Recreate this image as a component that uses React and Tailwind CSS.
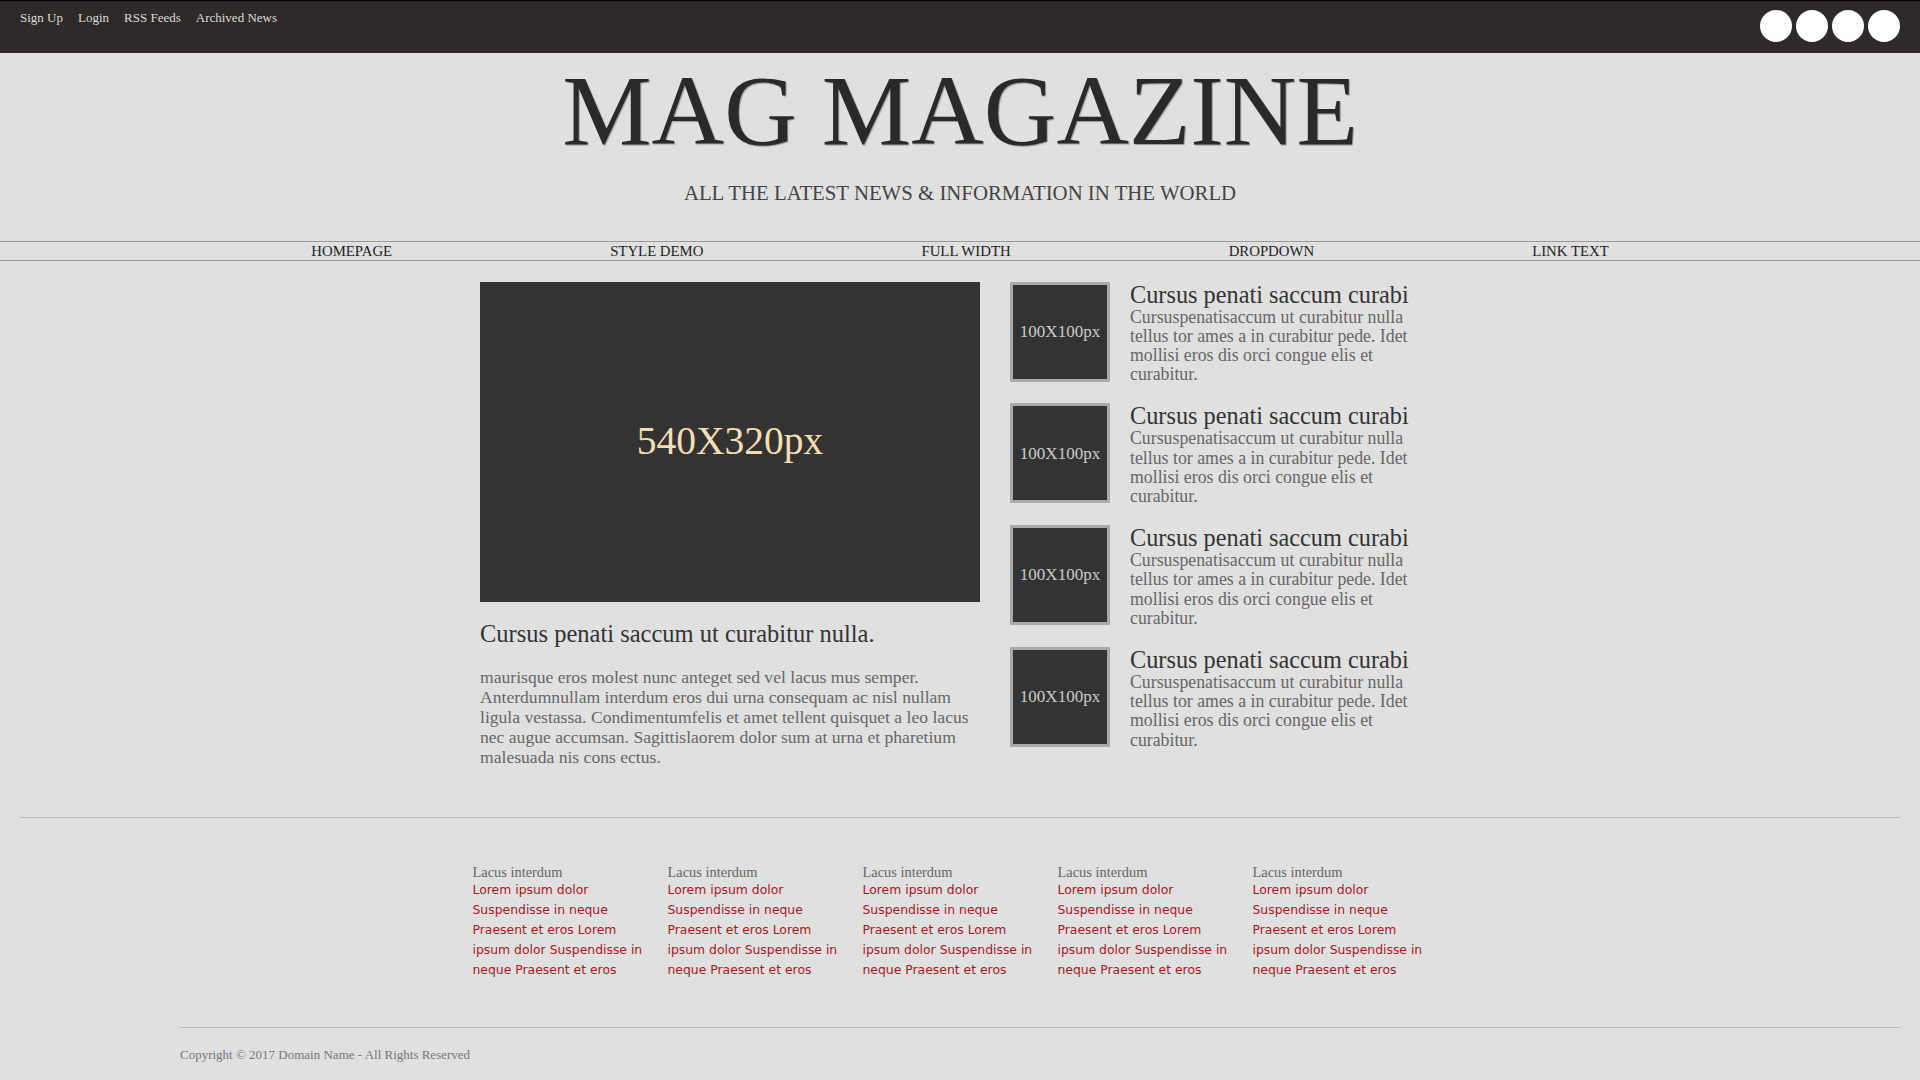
const topLinks = ['Sign Up', 'Login', 'RSS Feeds', 'Archived News']
const navLinks = ['HOMEPAGE', 'STYLE DEMO', 'FULL WIDTH', 'DROPDOWN', 'LINK TEXT']

const sideLines = [
  'Cursuspenatisaccum ut curabitur nulla',
  'tellus tor ames a in curabitur pede. Idet',
  'mollisi eros dis orci congue elis et',
  'curabitur.',
]

const mainLines = [
  'maurisque eros molest nunc anteget sed vel lacus mus semper.',
  'Anterdumnullam interdum eros dui urna consequam ac nisl nullam',
  'ligula vestassa. Condimentumfelis et amet tellent quisquet a leo lacus',
  'nec augue accumsan. Sagittislaorem dolor sum at urna et pharetium',
  'malesuada nis cons ectus.',
]

const footerLines = [
  'Lorem ipsum dolor',
  'Suspendisse in neque',
  'Praesent et eros Lorem',
  'ipsum dolor Suspendisse in',
  'neque Praesent et eros',
]

function SideItem() {
  return (
    <div className="flex gap-5">
      <div className="w-[100px] h-[100px] shrink-0 border-[3px] border-[#a9a9a9] bg-[#333] flex items-center justify-center text-[17px] text-[#cccccc]">
        100X100px
      </div>
      <div>
        <h3 className="text-[24.3px] leading-[26px] text-[#333] whitespace-nowrap">Cursus penati saccum curabi</h3>
        <p className="text-[17.8px] leading-[19.2px] text-[#666]">
          {sideLines.map(line => (
            <span key={line} className="block whitespace-nowrap">{line}</span>
          ))}
        </p>
      </div>
    </div>
  )
}

function FooterColumn() {
  return (
    <div className="w-[195px]">
      <h4 className="text-[14.4px] leading-[16px] text-[#666]">Lacus interdum</h4>
      <a href="#" className="block font-['DejaVu_Sans',sans-serif] text-[12.4px] leading-[20px] text-[#a3191c]">
        {footerLines.map(line => (
          <span key={line} className="block whitespace-nowrap">{line}</span>
        ))}
      </a>
    </div>
  )
}

export default function App() {
  return (
    <div className="min-h-screen bg-[#e0e0e0] font-['Liberation_Serif',serif] overflow-hidden">
      {/* Top bar */}
      <div className="h-[53px] border-t border-black bg-[#2d2a29] flex items-start justify-between pl-5 pr-5 pt-[9px]">
        <div className="flex gap-[15px] text-[13px] leading-[16px] text-[#dcdcdc]">
          {topLinks.map(l => (
            <a key={l} href="#">{l}</a>
          ))}
        </div>
        <div className="flex gap-1">
          {[0, 1, 2, 3].map(i => (
            <span key={i} className="block w-8 h-8 rounded-full bg-white" />
          ))}
        </div>
      </div>

      {/* Masthead */}
      <div className="text-center">
        <h1 className="mt-[7px] text-[100.5px] leading-none text-[#2a2a2a] [text-shadow:1px_1px_1px_#9a9a9a]">
          MAG MAGAZINE
        </h1>
        <p className="mt-5 text-[20.8px] leading-[24px] text-[#444]">
          ALL THE LATEST NEWS &amp; INFORMATION IN THE WORLD
        </p>
      </div>

      {/* Nav */}
      <nav className="mt-[36px] border-y border-[#999]">
        <ul className="h-[18px] flex justify-center gap-[218px] text-[14.8px] leading-[18px] text-[#222]">
          {navLinks.map(l => (
            <li key={l}><a href="#">{l}</a></li>
          ))}
        </ul>
      </nav>

      {/* Content */}
      <div className="w-[960px] mx-auto mt-[21px] flex gap-[30px]">
        <div className="w-[500px]">
          <div className="h-[320px] bg-[#333] flex items-center justify-center text-[39.5px] text-[#f5deb3]">
            540X320px
          </div>
          <h2 className="mt-[19px] text-[24.5px] leading-[26px] text-[#333]">Cursus penati saccum ut curabitur nulla.</h2>
          <p className="mt-[20px] text-[17.6px] leading-[20px] text-[#666]">
            {mainLines.map(line => (
              <span key={line} className="block whitespace-nowrap">{line}</span>
            ))}
          </p>
        </div>
        <div className="flex flex-col gap-[19px]">
          <SideItem />
          <SideItem />
          <SideItem />
          <SideItem />
        </div>
      </div>

      {/* Footer */}
      <div className="mt-[50px] mx-5 border-t border-[#bbb]" />
      <div className="w-[975px] mx-auto mt-[46px] flex">
        <FooterColumn />
        <FooterColumn />
        <FooterColumn />
        <FooterColumn />
        <FooterColumn />
      </div>
      <div className="mt-[47px] ml-[180px] mr-5 border-t border-[#bbb]" />
      <p className="ml-[180px] mt-[19px] text-[13px] leading-[16px] text-[#777]">
        Copyright © 2017 Domain Name - All Rights Reserved
      </p>
    </div>
  )
}
